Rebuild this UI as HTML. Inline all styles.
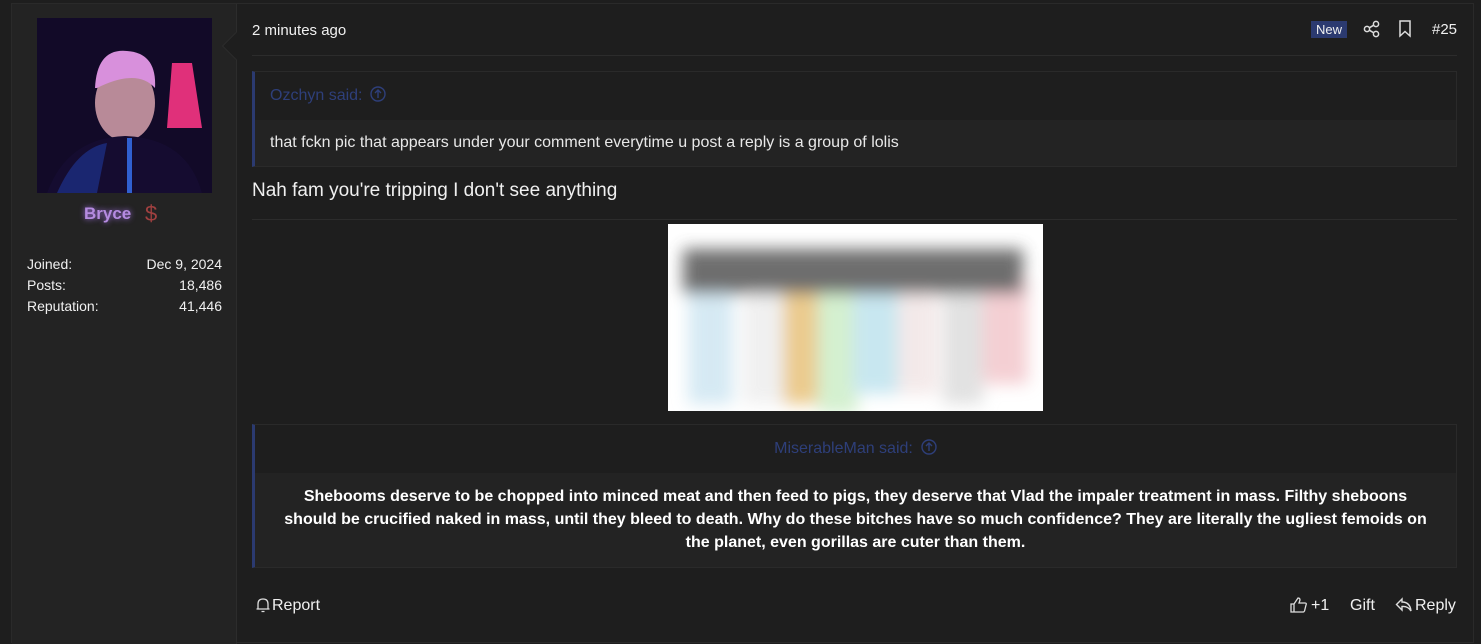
<!DOCTYPE html>
<html><head><meta charset="utf-8"><style>
*{box-sizing:border-box;margin:0;padding:0}
body{width:1481px;height:631px;background:#1e1e1e;font-family:"Liberation Sans",Arial,sans-serif;color:#e8e8e8;overflow:hidden;position:relative}
.panel{position:absolute;left:11px;top:3px;width:1463px;height:640px;border:1px solid #2a2a2a;background:#1e1e1e}
.user{position:absolute;left:12px;top:4px;width:225px;height:640px;background:#232323;border-right:1px solid #2c2c2c}
.arrow{position:absolute;left:226px;top:36px;width:20px;height:20px;background:#1e1e1e;transform:rotate(45deg);border-left:1px solid #2c2c2c;border-bottom:1px solid #2c2c2c}
.av{position:absolute;left:37px;top:18px;width:175px;height:175px;background:#0d0820;overflow:hidden}
.name{position:absolute;left:84px;top:204px;font-weight:bold;font-size:17px;color:#b58be0;text-shadow:0 0 6px #a070e0}
.dollar{position:absolute;left:145px;top:201px;font-size:22px;color:#a04040}
.stat{position:absolute;left:27px;width:195px;font-size:14px;display:flex;justify-content:space-between;color:#f0f0f0}
.t{position:absolute;font-size:14px;color:#f0f0f0}
.hr{position:absolute;left:252px;width:1205px;height:1px;background:#2c2c2c}
.q{position:absolute;left:252px;width:1205px;border:1px solid #2a2a2a;border-left:3px solid #2b3a70;background:#1e1e1e}
.qh{height:48px;color:#2e3f7a;font-size:16px;padding:14px 0 0 15px}
.qb{background:#232323;font-size:16px}
.circ{display:inline-block;width:16px;height:16px;vertical-align:-2px;margin-left:8px}
</style></head><body>
<div class="panel"></div>
<div class="user"></div>
<div class="arrow"></div>
<div class="av"><svg width="175" height="175">
<rect width="175" height="175" fill="#120a28"/>
<path d="M135 45 L155 45 L165 110 L130 110 Z" fill="#e0307a"/>
<ellipse cx="88" cy="85" rx="30" ry="38" fill="#b88a98"/>
<path d="M58 70 Q60 30 90 33 Q120 35 118 70 Q100 50 60 70Z" fill="#d890dc"/>
<path d="M10 175 Q30 120 88 118 Q150 120 165 175Z" fill="#150c30"/>
<path d="M20 175 Q40 130 70 125 L60 175Z" fill="#2040b0" opacity=".5"/>
<rect x="90" y="120" width="5" height="55" fill="#3060d0"/>
</svg></div>
<div class="name">Bryce</div><div class="dollar">$</div>
<div class="stat" style="top:256px"><span>Joined:</span><span>Dec 9, 2024</span></div>
<div class="stat" style="top:277px"><span>Posts:</span><span>18,486</span></div>
<div class="stat" style="top:298px"><span>Reputation:</span><span>41,446</span></div>

<div class="t" style="left:252px;top:22px;font-size:15px">2 minutes ago</div>
<div class="t" style="left:1311px;top:21px;background:#2b3a70;padding:1px 5px;font-size:13px;line-height:15px">New</div>
<svg style="position:absolute;left:1363px;top:20px" width="18" height="18" fill="none" stroke="#ddd" stroke-width="1.5"><circle cx="4" cy="9" r="2.6"/><circle cx="13" cy="4" r="2.6"/><circle cx="13" cy="14" r="2.6"/><path d="M6.3 7.8L10.7 5.2M6.3 10.2L10.7 12.8"/></svg>
<svg style="position:absolute;left:1398px;top:20px" width="14" height="18" fill="none" stroke="#ddd" stroke-width="1.5"><path d="M2 1H12V16L7 11.5L2 16Z"/></svg>
<div class="t" style="left:1432px;top:21px;font-size:15px">#25</div>
<div class="hr" style="top:55px"></div>

<div class="q" style="top:71px"><div class="qh">Ozchyn said:<svg class="circ" viewBox="0 0 16 16" fill="none" stroke="#2e3f7a" stroke-width="1.4"><circle cx="8" cy="8" r="7"/><path d="M8 12V4M5 7L8 4L11 7"/></svg></div>
<div class="qb" style="height:46px;padding:14px 0 0 15px">that fckn pic that appears under your comment everytime u post a reply is a group of lolis</div></div>

<div class="t" style="left:252px;top:180px;font-size:19px">Nah fam you're tripping I don't see anything</div>
<div class="hr" style="top:219px"></div>

<div style="position:absolute;left:668px;top:224px;width:375px;height:187px;background:#fff;overflow:hidden">
<svg width="375" height="187"><g opacity=".85" filter="url(#b)">
<rect x="20" y="50" width="45" height="130" fill="#cfe6f2"/><rect x="75" y="60" width="40" height="120" fill="#eee"/>
<rect x="115" y="60" width="35" height="120" fill="#e8c27a"/><rect x="150" y="60" width="40" height="130" fill="#cdeec8"/>
<rect x="185" y="60" width="45" height="110" fill="#bfe3ee"/><rect x="230" y="70" width="40" height="100" fill="#f2e6e6"/>
<rect x="275" y="70" width="40" height="110" fill="#ddd"/><rect x="315" y="55" width="45" height="105" fill="#f3c7cc"/>
<rect x="15" y="25" width="340" height="45" fill="#555"/></g>
<defs><filter id="b"><feGaussianBlur stdDeviation="8"/></filter></defs></svg></div>

<div class="q" style="top:424px"><div class="qh" style="text-align:center;padding-left:0">MiserableMan said:<svg class="circ" viewBox="0 0 16 16" fill="none" stroke="#2e3f7a" stroke-width="1.4"><circle cx="8" cy="8" r="7"/><path d="M8 12V4M5 7L8 4L11 7"/></svg></div>
<div class="qb" style="height:94px;padding:12px 0 0;text-align:center;font-weight:bold;line-height:23px;color:#fff;white-space:nowrap">Shebooms deserve to be chopped into minced meat and then feed to pigs, they deserve that Vlad the impaler treatment in mass. Filthy sheboons<br>should be crucified naked in mass, until they bleed to death. Why do these bitches have so much confidence? They are literally the ugliest femoids on<br>the planet, even gorillas are cuter than them.</div></div>

<svg style="position:absolute;left:255px;top:597px" width="16" height="16" fill="none" stroke="#ddd" stroke-width="1.3"><path d="M3 12V7Q3 2 8 2Q13 2 13 7V12H3ZM1.5 12H14.5M6.5 14.5H9.5"/></svg>
<div class="t" style="left:272px;top:597px;font-size:16px">Report</div>
<svg style="position:absolute;left:1290px;top:596px" width="18" height="18" fill="none" stroke="#ddd" stroke-width="1.3"><path d="M1 8H4V16H1ZM4 8L8 2Q10 2 10 4L9 7H15Q17 7 16 9L14.5 15Q14 16 13 16H4"/></svg>
<div class="t" style="left:1311px;top:597px;font-size:16px">+1</div>
<div class="t" style="left:1350px;top:597px;font-size:16px">Gift</div>
<svg style="position:absolute;left:1395px;top:596px" width="18" height="18" fill="none" stroke="#ddd" stroke-width="1.4"><path d="M7 3L1.5 8.5L7 14V10.5Q13 10 16 15Q15 6 7 6Z"/></svg>
<div class="t" style="left:1415px;top:597px;font-size:16px">Reply</div>
</body></html>
